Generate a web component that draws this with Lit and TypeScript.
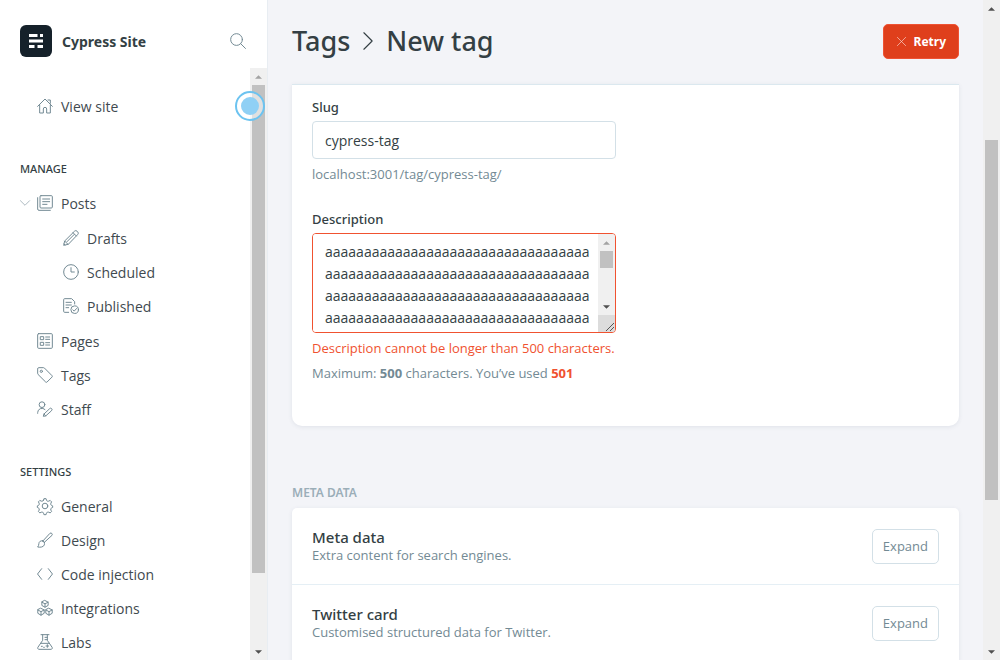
import { LitElement, html, svg, css } from "lit";
import { customElement, property } from "lit/decorators.js";

const icons: Record<string, unknown> = {
  home: svg`<path d="M1 12.500 12 1.500l11 11M4 10.500V22.500h5.500v-6a2.500 2.500 0 0 1 5 0v6H20V10.500M16.500 3h3.500v5"/>`,
  posts: svg`<rect x="4.500" y="1" width="18.500" height="18.500" rx="1.500"/><path d="M1 4v17a2 2 0 0 0 2 2h17M8.500 6h10.500M8.500 10h10.500M8.500 14h6.500"/>`,
  drafts: svg`<path d="M7.500 21.500 1 23l1.500-6.500L17.300 1.800a2.700 2.700 0 0 1 3.800 0l1.100 1.100a2.700 2.700 0 0 1 0 3.800zM2.500 16.500l5 5M15 4l5 5M17 6.500 6 17.500M1.500 21l1.500 1.500"/>`,
  scheduled: svg`<circle cx="12" cy="12" r="11"/><path d="M12 5.500V12h5"/>`,
  published: svg`<path d="M8.500 21.500H2.500A1.500 1.500 0 0 1 1 20V2.500A1.500 1.500 0 0 1 2.500 1H13l4.500 4.500V9M4.500 6.500h8M4.500 10.500h8M4.500 14.500h4"/><circle cx="17.500" cy="17.500" r="5.700"/><path d="m14.800 17.700 2 2 3.600-4"/>`,
  pages: svg`<rect x="1" y="1" width="22" height="22" rx="1.500"/><path d="M5.500 5.500h4.500v4.500H5.500zM5.500 14h4.500v4.500H5.500zM13 6h6M13 9.500h6M13 14.500h6M13 18h6"/>`,
  tags: svg`<path d="M1 2.500A1.500 1.500 0 0 1 2.500 1h7.300a2 2 0 0 1 1.400.6L22.500 13a1.500 1.500 0 0 1 0 2.100l-7.400 7.400a1.500 1.500 0 0 1-2.100 0L1.600 11.200A2 2 0 0 1 1 9.800z"/><circle cx="6.500" cy="6.500" r="1.700"/>`,
  staff: svg`<circle cx="7.500" cy="5.500" r="4.300"/><path d="M1 18.500v-1a6.500 6.500 0 0 1 11-4.700M12.500 22.500 9.500 23l.7-3.200 8.800-8.300a2 2 0 0 1 3 0 2 2 0 0 1 0 2.900zM10.500 19.500l2.500 2.800"/>`,
  general: svg`<circle cx="12" cy="12" r="4.200"/><path d="M9.800 3.200 10.400 1h3.200l.6 2.200a2.600 2.600 0 0 0 3.500 1.500l2-1.100 2.200 2.200-1.100 2a2.600 2.600 0 0 0 1.500 3.500l1.200.5v2.400l-1.200.5a2.600 2.600 0 0 0-1.500 3.500l1.100 2-2.200 2.200-2-1.100a2.600 2.600 0 0 0-3.500 1.500l-.6 2.200h-3.200l-.6-2.200a2.600 2.600 0 0 0-3.500-1.500l-2 1.100-2.200-2.200 1.100-2a2.600 2.600 0 0 0-1.500-3.500L.5 14.200v-2.400l1.200-.5a2.600 2.600 0 0 0 1.500-3.500l-1.100-2 2.200-2.200 2 1.100a2.600 2.600 0 0 0 3.500-1.500z"/>`,
  design: svg`<path d="M8.800 13.500 19.500 1.900a2.200 2.200 0 0 1 3 3.100L11 15.500M8.500 13.300c-3.200-.8-5.500 1.200-5.700 4.200-.1 2.200-.7 3.800-1.800 5 4 .8 8.800.2 10-3.200.7-2.500-.2-5.200-2.500-6zM8.500 13.300l3 2.700"/>`,
  code: svg`<path d="M7 4 .8 12 7 20M17 4l6.200 8L17 20"/>`,
  integrations: svg`<path d="m12 .8 4.700 2.400v5L12 10.800 7.300 8.200v-5zM7.300 3.200 12 5.800l4.700-2.600M12 5.800v5M6 12.500l4.800 2.400v5L6 22.800l-4.800-2.900v-5zM1.200 14.900 6 17.500l4.800-2.600M6 17.500v5.300M18 12.500l4.800 2.400v5L18 22.800l-4.800-2.900v-5zM13.200 14.900l4.800 2.600 4.800-2.600M18 17.500v5.300"/>`,
  labs: svg`<path d="M6 1h12M8.500 1v8.500L1.300 20a2 2 0 0 0 1.700 3h18a2 2 0 0 0 1.700-3L15.500 9.500V1M5.500 14h13M15.500 5h-3.500M15.500 8.500h-3.500M15.500 16v4M13.500 18h4M6.500 18.500h1.500M10 20h1"/>`,
  search: svg`<circle cx="9.800" cy="9.800" r="8.800"/><path d="m16 16 7.200 7.200"/>`,
  down: svg`<path d="m1 6.500 11 11 11-11"/>`,
  right: svg`<path d="m6.500 1 11 11-11 11"/>`,
  close: svg`<path d="m1 1 22 22M23 1 1 23"/>`,
};

@customElement("line-icon")
class LineIcon extends LitElement {
  @property() name = "";
  static styles = css`
    :host { display: block; flex: none; width: 16px; height: 16px; }
    svg { display: block; width: 100%; height: 100%; fill: none; stroke: currentColor;
      stroke-width: var(--stroke, 1.5); stroke-linecap: round; stroke-linejoin: round; overflow: visible; }
  `;
  render() {
    return html`<svg viewBox="0 0 24 24" aria-hidden="true">${icons[this.name]}</svg>`;
  }
}

@customElement("scroll-track")
class ScrollTrack extends LitElement {
  @property({ type: Number }) before = 0;
  @property({ type: Number }) size = 50;
  @property({ type: Boolean }) top = false;
  static styles = css`
    :host { display: flex; flex-direction: column; flex: none; width: 17px; background: #f0f0f0; }
    .arrow { display: grid; place-items: center; height: 17px; flex: none; }
    .arrow svg { width: 7px; height: 4px; fill: #505050; }
    .arrow svg.off { fill: #a3a3a3; }
    .lane { flex: 1; display: flex; flex-direction: column; padding: 0 2px; min-height: 0; }
    .thumb { background: #c1c1c1; flex: none; }
  `;
  render() {
    return html`
      <div class="arrow"><svg class=${this.top ? "off" : ""} viewBox="0 0 8 4"><path d="M0 4h8L4 0z"/></svg></div>
      <div class="lane">
        <div style="height:${this.before}%"></div>
        <div class="thumb" style="height:${this.size}%"></div>
      </div>
      <div class="arrow"><svg viewBox="0 0 8 4"><path d="M0 0h8L4 4z"/></svg></div>
    `;
  }
}

type Item = { icon: string; label: string; children?: Item[] };

const manage: Item[] = [
  {
    icon: "posts",
    label: "Posts",
    children: [
      { icon: "drafts", label: "Drafts" },
      { icon: "scheduled", label: "Scheduled" },
      { icon: "published", label: "Published" },
    ],
  },
  { icon: "pages", label: "Pages" },
  { icon: "tags", label: "Tags" },
  { icon: "staff", label: "Staff" },
];

const settings: Item[] = [
  { icon: "general", label: "General" },
  { icon: "design", label: "Design" },
  { icon: "code", label: "Code injection" },
  { icon: "integrations", label: "Integrations" },
  { icon: "labs", label: "Labs" },
];

@customElement("side-nav")
class SideNav extends LitElement {
  static styles = css`
    :host { display: flex; flex-direction: column; background: #fff; border-right: 1px solid #e8edf2; min-height: 0; }
    header { display: flex; align-items: center; height: 68px; flex: none; padding: 14px 21px 0 20px; box-sizing: border-box; }
    .logo { width: 32px; height: 32px; flex: none; }
    .site { flex: 1; margin-left: 10px; font-size: 14px; font-weight: 700; color: #343f44; }
    button { border: 0; background: none; padding: 0; color: #738a94; }
    .body { position: relative; flex: 1; display: flex; min-height: 0; }
    nav { flex: 1; padding-top: 21px; overflow: hidden; }
    ul { list-style: none; margin: 0; padding: 0; }
    a { display: flex; align-items: center; gap: 8px; height: 34px; padding-left: 37px; color: #3f4a50;
      font: 14px var(--copy); text-decoration: none; }
    a line-icon { color: #738a94; }
    .sub { padding: 1px 0; }
    .sub a { padding-left: 63px; }
    .parent { display: flex; align-items: center; }
    .parent button { margin-left: 20px; width: 10px; color: #a5b4bb; }
    .parent button line-icon { width: 10px; height: 10px; --stroke: 2.2; }
    .parent a { padding-left: 7px; flex: 1; }
    h2 { margin: 29px 0 0; padding-left: 20px; font-size: 11px; line-height: 34px; font-weight: 500; color: #343f44; }
    .beacon { position: absolute; top: 23px; right: 2px; width: 30px; height: 30px; box-sizing: border-box;
      border: 2px solid #6cc3f0; border-radius: 50%; background: rgba(255, 255, 255, 0.5); padding: 4px; }
    .beacon::before { content: ""; display: block; width: 18px; height: 18px; border-radius: 50%; background: #8fd0f5; }
  `;
  item(i: Item): unknown {
    const link = html`<a href="#"><line-icon name=${i.icon}></line-icon>${i.label}</a>`;
    if (!i.children) return html`<li>${link}</li>`;
    return html`<li>
      <div class="parent">
        <button aria-label="Collapse ${i.label}"><line-icon name="down"></line-icon></button>${link}
      </div>
      <ul class="sub">${i.children.map((c) => this.item(c))}</ul>
    </li>`;
  }
  render() {
    return html`
      <header>
        <svg class="logo" viewBox="0 0 32 32" aria-hidden="true">
          <rect width="32" height="32" rx="6" fill="#15212a"/>
          <path fill="#fff" d="M9 9h8.500v3H9zM20 9h3v3h-3zM9 14.500h14v3H9zM9 20h5.500v3H9zM17.500 20H23v3h-5.500z"/>
        </svg>
        <div class="site">Cypress Site</div>
        <button aria-label="Search"><line-icon name="search"></line-icon></button>
      </header>
      <div class="body">
        <nav>
          <ul>${this.item({ icon: "home", label: "View site" })}</ul>
          <h2>MANAGE</h2>
          <ul>${manage.map((i) => this.item(i))}</ul>
          <h2>SETTINGS</h2>
          <ul>${settings.map((i) => this.item(i))}</ul>
        </nav>
        <scroll-track top before="0" size="87.5"></scroll-track>
        <div class="beacon"></div>
      </div>
    `;
  }
}

@customElement("tag-editor")
class TagEditor extends LitElement {
  static styles = css`
    :host { display: flex; min-width: 0; min-height: 0; }
    * { box-sizing: border-box; }
    main { flex: 1; min-width: 0; display: flex; flex-direction: column; overflow: hidden; padding: 0 24px; }
    header { display: flex; align-items: center; justify-content: space-between; flex: none; height: 84px; padding-bottom: 2px; }
    h1 { display: flex; align-items: center; gap: 9px; margin: 0; font-size: 27px; line-height: 36px; font-weight: 500; color: #343f44; }
    h1 a { color: inherit; text-decoration: none; }
    h1 line-icon { width: 18px; height: 18px; --stroke: 1.5; }
    .retry { display: flex; align-items: center; gap: 8px; height: 35px; padding: 0 12px 0 13px; border: 1px solid #ee5233;
      border-radius: 5px; background: #df3f1c; color: #fff; font: 700 12px var(--font); }
    .retry line-icon { width: 9px; height: 9px; --stroke: 1.8; opacity: 0.8; }
    .card { flex: none; background: #fff; box-shadow: 0 1px 4px rgba(60, 80, 110, 0.1); }
    .form { display: grid; grid-template-columns: 1fr 1fr; column-gap: 20px; border-top: 1px solid #dbe8ef;
      border-radius: 0 0 10px 10px; padding: 12px 20px 43px; }
    label { display: block; font-size: 13px; line-height: 20px; font-weight: 500; color: #343f44; margin-bottom: 4px; }
    input { display: block; width: 100%; height: 38px; padding: 0 12px; border: 1px solid #d3e0e7; border-radius: 4px;
      font: 14px var(--copy); color: #343f44; outline: 0; }
    p { margin: 0; font: 13px/20px var(--copy); color: #738a94; }
    .hint { margin: 5px 0 25px; }
    .area { display: flex; height: 100px; border: 1px solid #f05230; border-radius: 4px; overflow: hidden; }
    textarea { flex: 1; min-width: 0; resize: none; overflow: hidden; border: 0; outline: 0; padding: 7px 8px 0 12px;
      font: 14px/22px var(--copy); color: #343f44; word-break: break-all; background: #fff; }
    .side { display: flex; flex-direction: column; }
    .side scroll-track { flex: 1; }
    .grip { width: 17px; height: 17px; background: #dcdcdc; stroke: #555; stroke-width: 1; fill: none; display: block; }
    .error { color: #f05230; margin: 5px 0; }
    .used { color: #f05230; }
    h2 { flex: none; margin: 57px 0 5px; font-size: 12px; line-height: 20px; font-weight: 600; color: #9baeb8; }
    .list { border-radius: 5px 5px 0 0; }
    .row { display: flex; align-items: center; justify-content: space-between; padding: 20px; height: 76px; }
    .row + .row { border-top: 1px solid #e5eff5; height: 77px; }
    h3 { margin: 0; font-size: 15px; line-height: 18px; font-weight: 500; color: #343f44; }
    .row p { line-height: 18px; }
    .row button { height: 35px; padding: 0 10px; border: 1px solid #d3e0e7; border-radius: 5px; background: #fff;
      color: #738a94; font: 13px var(--copy); }
  `;
  section(title: string, text: string) {
    return html`<div class="row">
      <div><h3>${title}</h3><p>${text}</p></div>
      <button>Expand</button>
    </div>`;
  }
  render() {
    const text = "a".repeat(501);
    return html`
      <main>
        <header>
          <h1><a href="#">Tags</a><line-icon name="right"></line-icon>New tag</h1>
          <button class="retry"><line-icon name="close"></line-icon>Retry</button>
        </header>
        <section class="card form">
          <div>
            <label for="slug">Slug</label>
            <input id="slug" .value=${"cypress-tag"} />
            <p class="hint">localhost:3001/tag/cypress-tag/</p>
            <label for="description">Description</label>
            <div class="area">
              <textarea id="description" spellcheck="false" .value=${text}></textarea>
              <div class="side">
                <scroll-track top before="0" size="36"></scroll-track>
                <svg class="grip" viewBox="0 0 17 17" aria-hidden="true"><path d="M8 16l8-8M12 16l4-4"/></svg>
              </div>
            </div>
            <p class="error">Description cannot be longer than 500 characters.</p>
            <p>Maximum: <b>500</b> characters. You’ve used <b class="used">501</b></p>
          </div>
        </section>
        <h2>META DATA</h2>
        <section class="card list">
          ${this.section("Meta data", "Extra content for search engines.")}
          ${this.section("Twitter card", "Customised structured data for Twitter.")}
        </section>
      </main>
      <scroll-track before="19.7" size="57.4"></scroll-track>
    `;
  }
}

@customElement("app-root")
class AppRoot extends LitElement {
  static styles = css`
    :host { --font: "Noto Sans", "Open Sans", sans-serif; --copy: "Open Sans", "Noto Sans", sans-serif;
      display: grid; grid-template-columns: 268px minmax(0, 1fr); grid-template-rows: minmax(0, 1fr);
      height: 100vh; overflow: hidden; background: #f3f4f8; font-family: var(--font); }
  `;
  render() {
    return html`<side-nav></side-nav><tag-editor></tag-editor>`;
  }
}
